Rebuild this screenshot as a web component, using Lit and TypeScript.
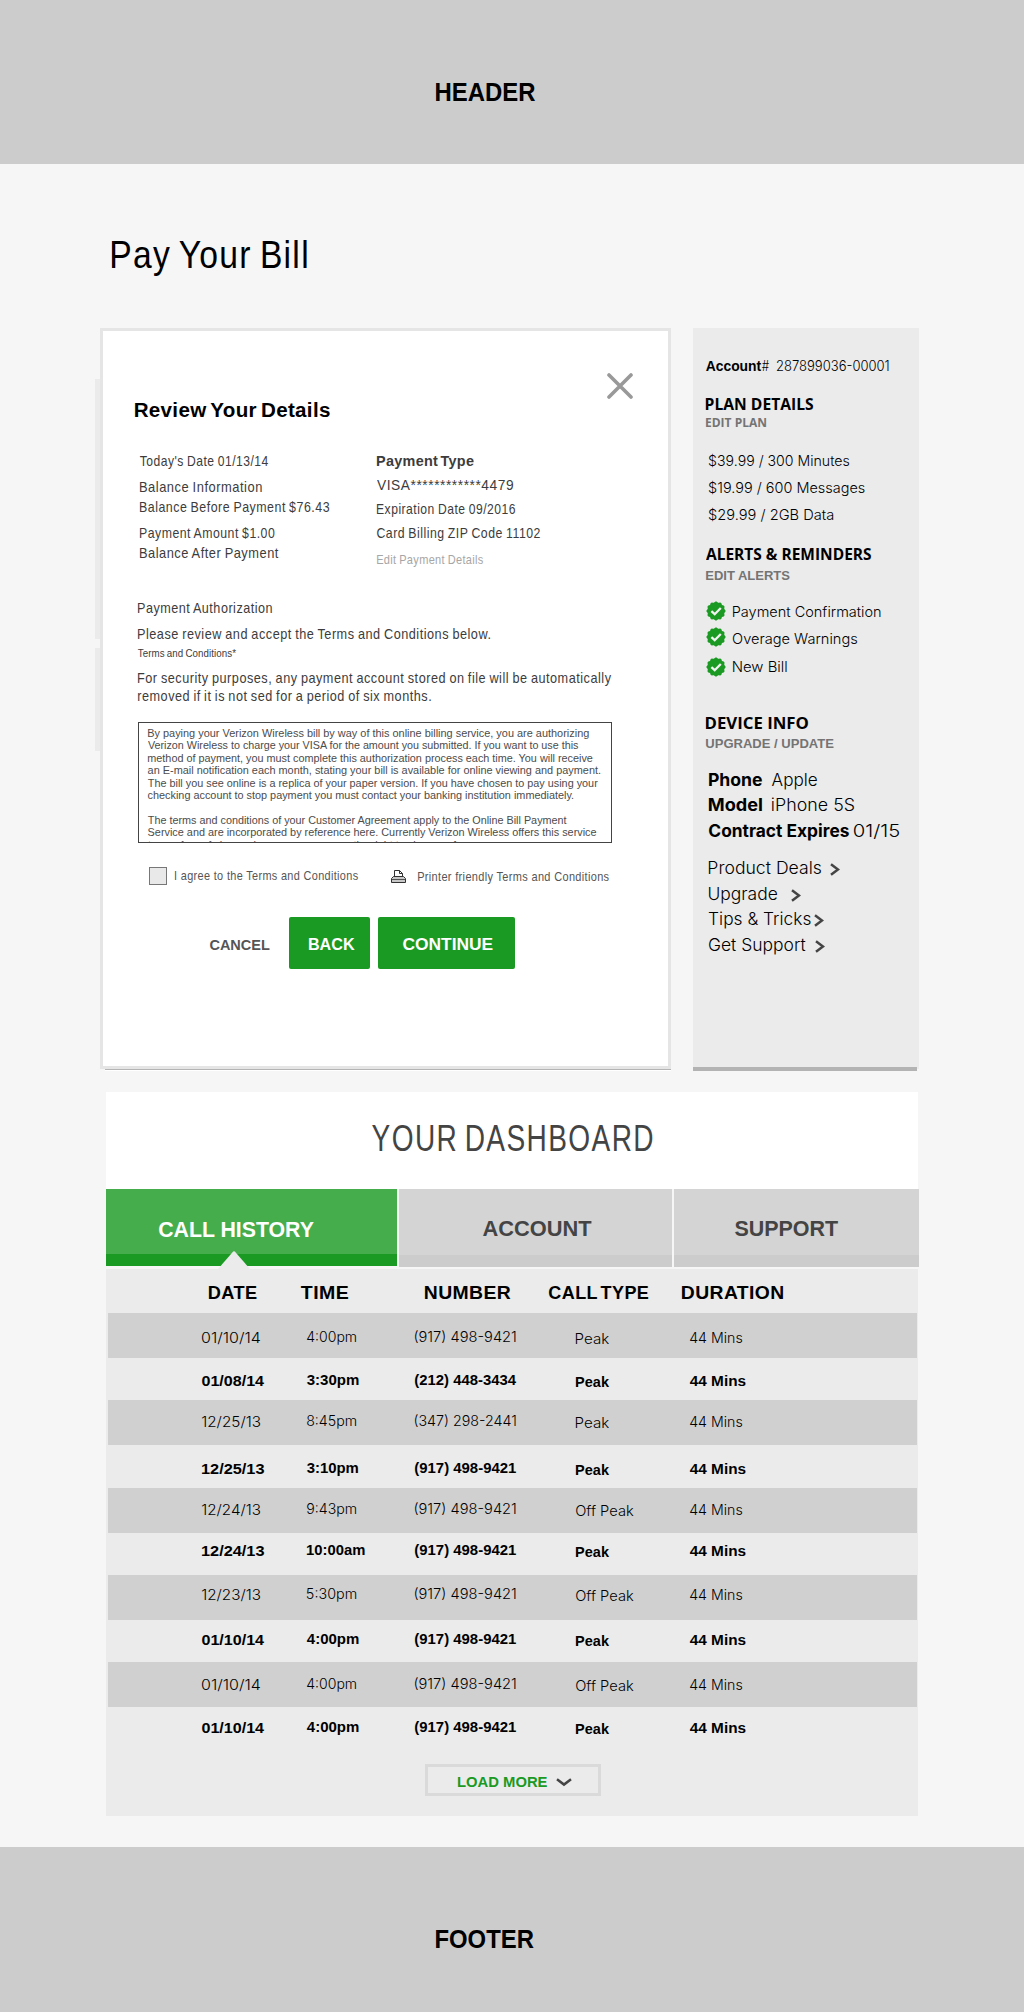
import { LitElement, html, css, svg } from "lit";
import { customElement, property, query } from "lit/decorators.js";
import { classMap } from "lit/directives/class-map.js";
import { styleMap } from "lit/directives/style-map.js";

/** One line of text, condensed or expanded so that its ink spans a set width. */
@customElement("fit-text")
class FitText extends LitElement {
  @property() text = "";
  @property({ type: Number }) w = 0;
  @query("span") span!: HTMLSpanElement;

  static styles = css`
    :host { display: block; line-height: 20px; white-space: nowrap; }
    span { display: inline-block; transform-origin: 0 0; vertical-align: top; white-space: pre; }
  `;

  updated() {
    const cs = getComputedStyle(this);
    const ctx = document.createElement("canvas").getContext("2d")!;
    // Measured at ten times the size, so that the ink bounds are not rounded to whole pixels.
    ctx.font = `${cs.fontWeight} ${parseFloat(cs.fontSize) * 10}px ${cs.fontFamily}`;
    const m = ctx.measureText(this.text);
    const left = m.actualBoundingBoxLeft / 10;
    const letters = (parseFloat(cs.letterSpacing) || 0) * (this.text.length - 1);
    const words = (parseFloat(cs.wordSpacing) || 0) * (this.text.split(" ").length - 1);
    const ink = m.actualBoundingBoxRight / 10 + left + letters + words;
    const scale = this.w / ink;
    this.style.width = `${this.w}px`;
    this.span.style.transform = `translateX(${left * scale}px) scaleX(${scale})`;
  }

  render() {
    return html`<span>${this.text}</span>`;
  }
}

const fit = (text: string, w: number, cls = "") =>
  html`<fit-text class=${cls} .text=${text} .w=${w}></fit-text>`;

type Call = { h: number; pad: number; date: string; time: string; tw: number; num: string; type: string };

const CALLS: Call[] = [
  { h: 45, pad: 14.7, date: "01/10/14", time: "4:00pm", tw: 49, num: "(917) 498-9421", type: "Peak" },
  { h: 42, pad: 13, date: "01/08/14", time: "3:30pm", tw: 51.5, num: "(212) 448-3434", type: "Peak" },
  { h: 45, pad: 12, date: "12/25/13", time: "8:45pm", tw: 49, num: "(347) 298-2441", type: "Peak" },
  { h: 43, pad: 14, date: "12/25/13", time: "3:10pm", tw: 51, num: "(917) 498-9421", type: "Peak" },
  { h: 45, pad: 12, date: "12/24/13", time: "9:43pm", tw: 49, num: "(917) 498-9421", type: "Off Peak" },
  { h: 42, pad: 8, date: "12/24/13", time: "10:00am", tw: 57.5, num: "(917) 498-9421", type: "Peak" },
  { h: 45, pad: 10, date: "12/23/13", time: "5:30pm", tw: 49, num: "(917) 498-9421", type: "Off Peak" },
  { h: 42, pad: 10, date: "01/10/14", time: "4:00pm", tw: 51.5, num: "(917) 498-9421", type: "Peak" },
  { h: 45, pad: 12.7, date: "01/10/14", time: "4:00pm", tw: 49, num: "(917) 498-9421", type: "Off Peak" },
  { h: 57, pad: 11, date: "01/10/14", time: "4:00pm", tw: 51.5, num: "(917) 498-9421", type: "Peak" },
];

const TERMS: [string, number][] = [
  ["By paying your Verizon Wireless bill by way of this online billing service, you are authorizing", 441],
  ["Verizon Wireless to charge your VISA for the amount you submitted. If you want to use this", 431],
  ["method of payment, you must complete this authorization process each time. You will receive", 445],
  ["an E-mail notification each month, stating your bill is available for online viewing and payment.", 452.5],
  ["The bill you see online is a replica of your paper version. If you have chosen to pay using your", 450],
  ["checking account to stop payment you must contact your banking institution immediately.", 425.5],
  ["", 0],
  ["The terms and conditions of your Customer Agreement apply to the Online Bill Payment", 419.5],
  ["Service and are incorporated by reference here. Currently Verizon Wireless offers this service", 448.5],
  ["to you free of charge, however we reserve the right to charge a fee", 320],
];

/** Scalloped seal outline centred in a 20x20 box. */
const seal = (() => {
  const pts: string[] = [];
  for (let i = 0; i < 72; i++) {
    const a = (i / 72) * Math.PI * 2;
    const r = 9.1 + 0.55 * Math.cos(a * 12);
    pts.push(`${(10 + r * Math.cos(a)).toFixed(2)},${(10 + r * Math.sin(a)).toFixed(2)}`);
  }
  return pts.join(" ");
})();

const check = html`<svg class="seal" viewBox="0 0 20 20">${svg`
  <polygon points=${seal} fill="#1a9a22"/>
  <path d="M5.4 10.2 8.7 13.2 14.8 7" fill="none" stroke="#f2f2f2" stroke-width="2.3"/>`}</svg>`;

const chevron = html`<svg class="chev" viewBox="0 0 10 13"><path d="M1 1.2 8 6.5 1 11.8" fill="none" stroke="#444" stroke-width="2.5"/></svg>`;

@customElement("app-root")
class AppRoot extends LitElement {
  static styles = css`
    :host {
      display: block; width: 1024px; height: 2012px; overflow: hidden;
      background: #f6f6f6; color: #000;
      font-family: "Liberation Sans", Arial, sans-serif; font-size: 15px;
    }
    svg { display: block; flex: none; }
    .bold { font-weight: 700; }
    .header, .footer { background: #ccc; box-sizing: border-box; padding-left: 435.7px; font-size: 25px; font-weight: 700; }
    .header { height: 164px; padding-top: 82px; }
    .footer { height: 165px; padding-top: 82px; margin-top: 31px; }
    .title { height: 164px; box-sizing: border-box; padding: 80px 0 0 111.5px; font-size: 39.5px; letter-spacing: 1.5px; word-spacing: -3px; }

    .main { display: flex; padding-left: 95px; height: 764px; box-sizing: border-box; }
    .ghosts { width: 5px; padding-top: 51px; display: flex; flex-direction: column; gap: 9px; }
    .ghost { height: 260px; background: #ebebeb; }
    .ghost.short { height: 103px; }
    .card-wrap { width: 571px; margin-right: 22px; }
    .card { box-sizing: border-box; height: 741px; border: 3px solid #e5e5e5; background: #fff; color: #3c3c3c; }
    .card-shadow { height: 1px; margin-left: 5px; background: #b4b4b4; border-bottom: 1px solid #fff; }
    .close { display: flex; justify-content: flex-end; padding: 42px 35px 0 0; }
    .review { margin: 1px 0 0 31.5px; font-size: 20px; font-weight: 700; color: #000; letter-spacing: .3px; word-spacing: -1.8px; }
    .details { display: grid; grid-template-columns: 237px 1fr; margin: 31px 0 0 36.5px; height: 119px; }
    .cond { letter-spacing: .6px; word-spacing: -.8px; }
    .col { display: grid; align-items: start; align-content: start; }
    .left { grid-template-rows: 26px 20px 26px 20px 20px; }
    .right { grid-template-rows: 24px 24px 24px 27px 20px; }
    .right .bold { word-spacing: -2px; letter-spacing: .3px; }
    .auth { grid-template-rows: 26px 19px 25px 18px 20px; margin: 28px 0 0 34.5px; }
    .small { font-size: 11px; letter-spacing: .1px; }
    .mid { font-size: 12.8px; letter-spacing: .4px; color: #555; }
    .mid.pale { color: #a6a6a6; }
    .terms {
      box-sizing: border-box; width: 474px; height: 121px; margin: 16px 0 0 35px; overflow: hidden;
      border: 1px solid #444; padding: 4px 0 0 8.5px; font-size: 10.9px; color: #4c4c4c;
    }
    .terms-line { height: 12.4px; }
    .terms-line fit-text { line-height: 12px; }
    .agree { display: flex; align-items: flex-start; margin: 24px 0 0 46px; height: 18px; }
    .box { box-sizing: border-box; width: 18px; height: 18px; border: 1px solid #777; background: #e9e9e9; margin-right: 7.6px; }
    .agree-text { margin-top: -1px; }
    .printer { margin: 3px 11.8px 0 33.5px; }
    .actions { display: flex; align-items: flex-start; margin: 32px 0 0 107px; }
    .cancel { margin: 18px 19.5px 0 0; font-weight: 700; color: #555; }
    .btn { box-sizing: border-box; height: 52px; border-radius: 2px; background: #1a9a22; color: #fff; font-size: 17px; font-weight: 700; padding-top: 18px; }
    .back { width: 81px; padding-left: 19.5px; margin-right: 8px; }
    .continue { width: 137px; padding-left: 25px; }

    .side { width: 226px; height: 741px; background: #ebebeb; display: flex; flex-direction: column; justify-content: space-between; }
    .side-bar { width: 224px; height: 4px; margin-bottom: -2px; background: #b3b3b3; flex: none; }
    .side-body { padding: 28px 0 0 13px; }
    .light { font-family: Inter, "Liberation Sans", sans-serif; font-weight: 300; }
    .row { display: flex; align-items: flex-start; }
    .account { font-size: 14px; height: 38px; }
    .account .num { margin-left: 8px; }
    .account .hash { margin-left: 1px; }
    .head { font-family: "Open Sans", "Noto Sans", sans-serif; font-weight: 700; font-size: 15.8px; }
    .sub { font-size: 13px; font-weight: 700; color: #747474; }
    .sub.os { font-family: "Open Sans", "Noto Sans", sans-serif; }
    .plan { height: 18px; }
    .plan-list { display: grid; grid-template-rows: 27px 27px 27px; margin: 19px 0 0 2.5px; font-size: 14.5px; align-items: start; }
    .alerts-head { margin-top: 12px; height: 22px; }
    .alerts { display: grid; grid-template-rows: 26px 30px 20px; margin: 15px 0 0 .3px; align-items: start; font-size: 14.5px; }
    .alerts .row { gap: 6.3px; }
    .seal { width: 20px; height: 20px; }
    .alert-1 { margin-top: 1px; }
    .alert-2 { margin-top: 2px; }
    .device-head { margin-top: 36px; height: 21px; }
    .device { display: grid; grid-template-rows: 25px 26px 37px 26px 25px 26px 20px; margin: 16px 0 0 3px; align-items: start; font-size: 17.3px; }
    .gap { margin-left: 10.3px; }
    .gap-s { margin-left: 5.2px; }
    .chev { width: 10px; height: 13px; margin-top: 5px; }
    .c9 { margin-left: 9px; } .c14 { margin-left: 14px; } .c4 { margin-left: 3.5px; } .c10 { margin-left: 9.5px; }

    .dash { width: 812px; margin-left: 106px; }
    .dash-title { height: 97px; box-sizing: border-box; background: #fff; padding: 37px 0 0 265.7px; font-size: 36px; color: #444; letter-spacing: 1.8px; word-spacing: -3.5px; }
    .tabs { display: flex; gap: 2px; height: 80px; width: 813px; }
    .tab { box-sizing: border-box; flex: none; height: 78px; padding-top: 30px; font-size: 22px; font-weight: 700; color: #444; background: linear-gradient(#d4d4d4 66px, #ccc 66px); }
    .tab.history { position: relative; width: 291px; height: 77px; padding: 31px 0 0 52.7px; color: #fff; background: linear-gradient(#46ad4c 65.3px, #1a9a22 65.3px); }
    .tab.acct { width: 273px; padding-left: 84px; }
    .tab.support { width: 245px; padding-left: 61px; }
    .pointer { position: absolute; left: 112px; top: 62px; }
    .table { height: 547px; background: #ebebeb; }
    .thead, .tr { display: grid; align-items: start; box-sizing: border-box; }
    .thead { grid-template-columns: 91.7px 124px 124.6px 133px 101px; padding: 14px 0 0 103px; height: 44px; font-size: 19px; font-weight: 700; letter-spacing: .4px; word-spacing: -2.5px; }
    .tr { grid-template-columns: 105px 107.5px 161px 114.5px 60px; margin: 0 1px 0 2px; padding-left: 94.4px; font-size: 14.3px; }
    .tr.dark { background: #d0d0d0; font-family: Inter, "Liberation Sans", sans-serif; font-weight: 300; font-size: 14px; }
    .tr.strong { font-weight: 700; }
    .up { margin-top: -1px; }
    .down { margin-top: 1px; }
    .more { box-sizing: border-box; width: 176px; height: 32px; margin-left: 319px; border: 3px solid #dadada; display: flex; padding: 5px 0 0 29.8px; font-weight: 700; color: #1a9a22; }
    .more-icon { margin: 6px 0 0 9px; }
  `;

  private callRow(c: Call, i: number) {
    const b = i % 2 === 1;
    return html`<div class=${classMap({ tr: true, dark: !b, strong: b })}
      style=${styleMap({ height: `${c.h}px`, paddingTop: `${c.pad}px` })}>
      ${fit(c.date, b ? 62 : 58)}
      ${fit(c.time, c.tw, "up")}
      ${fit(c.num, b ? 101 : 100.5, "up")}
      ${fit(c.type, c.type === "Peak" ? 33 : 57.5, "down")}
      ${fit("44 Mins", b ? 55.5 : 52)}
    </div>`;
  }

  render() {
    return html`
      <header class="header">${fit("HEADER", 99)}</header>
      <div class="title">${fit("Pay Your Bill", 195)}</div>
      <main class="main">
        <div class="ghosts"><div class="ghost"></div><div class="ghost short"></div></div>
        <div class="card-wrap">
          <section class="card">
            <div class="close">
              <svg width="26" height="26" viewBox="0 0 26 26"><path d="M2 2 24 24M24 2 2 24" stroke="#999" stroke-width="3.6" stroke-linecap="round"/></svg>
            </div>
            <div class="review">${fit("Review Your Details", 195)}</div>
            <div class="details cond">
              <div class="col left">
                ${fit("Today's Date 01/13/14", 128)}
                ${fit("Balance Information", 121.5)}
                ${fit("Balance Before Payment $76.43", 189)}
                ${fit("Payment Amount $1.00", 135)}
                ${fit("Balance After Payment", 139)}
              </div>
              <div class="col right">
                ${fit("Payment Type", 96.5, "bold")}
                ${fit("VISA************4479", 136)}
                ${fit("Expiration Date 09/2016", 138)}
                ${fit("Card Billing ZIP Code 11102", 163)}
                ${fit("Edit Payment Details", 106, "mid pale")}
              </div>
            </div>
            <div class="col auth cond">
              ${fit("Payment Authorization", 134.5)}
              ${fit("Please review and accept the Terms and Conditions below.", 352)}
              ${fit("Terms and Conditions*", 98, "small")}
              ${fit("For security purposes, any payment account stored on file will be automatically", 473)}
              ${fit("removed if it is not sed for a period of six months.", 292.5)}
            </div>
            <div class="terms">
              ${TERMS.map(([t, w]) => html`<div class="terms-line">${t ? fit(t, w) : ""}</div>`)}
            </div>
            <div class="agree">
              <div class="box"></div>
              ${fit("I agree to the Terms and Conditions", 183, "mid agree-text")}
              <svg class="printer" width="15" height="13" viewBox="0 0 15 13">
                <path d="M3.5 7V.5h5l3 3V7" fill="#fff" stroke="#333"/>
                <path d="M8.5.5v3h3" fill="none" stroke="#333"/>
                <path d="M2.5 6.5h10l2 2v4H.5v-4z" fill="#c8c8c8" stroke="#333"/>
                <path d="M1 9.5h13" stroke="#555"/>
              </svg>
              ${fit("Printer friendly Terms and Conditions", 191, "mid")}
            </div>
            <div class="actions">
              ${fit("CANCEL", 59.5, "cancel")}
              <div class="btn back">${fit("BACK", 45.5)}</div>
              <div class="btn continue">${fit("CONTINUE", 89.5)}</div>
            </div>
          </section>
          <div class="card-shadow"></div>
        </div>
        <aside class="side">
          <div class="side-body">
            <div class="row account">
              ${fit("Account", 55, "bold")}${fit("#", 7, "light hash")}${fit("287899036-00001", 111.5, "light num")}
            </div>
            <div class="plan">${fit("PLAN DETAILS", 107, "head")}</div>
            ${fit("EDIT PLAN", 60, "sub os")}
            <div class="plan-list light">
              ${fit("$39.99 / 300 Minutes", 140)}
              ${fit("$19.99 / 600 Messages", 155.5)}
              ${fit("$29.99 / 2GB Data", 124)}
            </div>
            <div class="alerts-head">${fit("ALERTS & REMINDERS", 165, "head")}</div>
            ${fit("EDIT ALERTS", 84, "sub")}
            <div class="alerts light">
              <div class="row">${check}${fit("Payment Confirmation", 147.5, "alert-1")}</div>
              <div class="row">${check}${fit("Overage Warnings", 124, "alert-2")}</div>
              <div class="row">${check}${fit("New Bill", 53.5)}</div>
            </div>
            <div class="device-head">${fit("DEVICE INFO", 102, "head")}</div>
            ${fit("UPGRADE / UPDATE", 127.5, "sub")}
            <div class="device light">
              <div class="row">${fit("Phone", 53, "bold")}${fit("Apple", 45, "gap")}</div>
              <div class="row">${fit("Model", 53, "bold")}${fit("iPhone 5S", 82, "gap")}</div>
              <div class="row">${fit("Contract Expires", 140, "bold")}${fit("01/15", 45, "gap-s")}</div>
              <div class="row">${fit("Product Deals", 112)}<span class="c9">${chevron}</span></div>
              <div class="row">${fit("Upgrade", 68)}<span class="c14">${chevron}</span></div>
              <div class="row">${fit("Tips & Tricks", 101.5)}<span class="c4">${chevron}</span></div>
              <div class="row">${fit("Get Support", 96.5)}<span class="c10">${chevron}</span></div>
            </div>
          </div>
          <div class="side-bar"></div>
        </aside>
      </main>
      <section class="dash">
        <div class="dash-title">${fit("YOUR DASHBOARD", 280.6)}</div>
        <nav class="tabs">
          <div class="tab history">${fit("CALL HISTORY", 155)}
            <svg class="pointer" width="32" height="18" viewBox="0 0 32 18"><path d="M0 18 15.2.6Q16-.2 16.8.6L32 18z" fill="#ebebeb"/></svg>
          </div>
          <div class="tab acct">${fit("ACCOUNT", 108.5)}</div>
          <div class="tab support">${fit("SUPPORT", 103)}</div>
        </nav>
        <div class="table">
          <div class="thead">
            ${fit("DATE", 47.5)}${fit("TIME", 47)}${fit("NUMBER", 85.5)}${fit("CALL TYPE", 99.5)}${fit("DURATION", 101)}
          </div>
          ${CALLS.map((c, i) => this.callRow(c, i))}
          <div class="more">${fit("LOAD MORE", 89)}
            <svg class="more-icon" width="16" height="9" viewBox="0 0 16 9"><path d="M1 1.3 8 6.6 15 1.3" fill="none" stroke="#444" stroke-width="2.5"/></svg>
          </div>
        </div>
      </section>
      <footer class="footer">${fit("FOOTER", 97.5)}</footer>
    `;
  }
}
